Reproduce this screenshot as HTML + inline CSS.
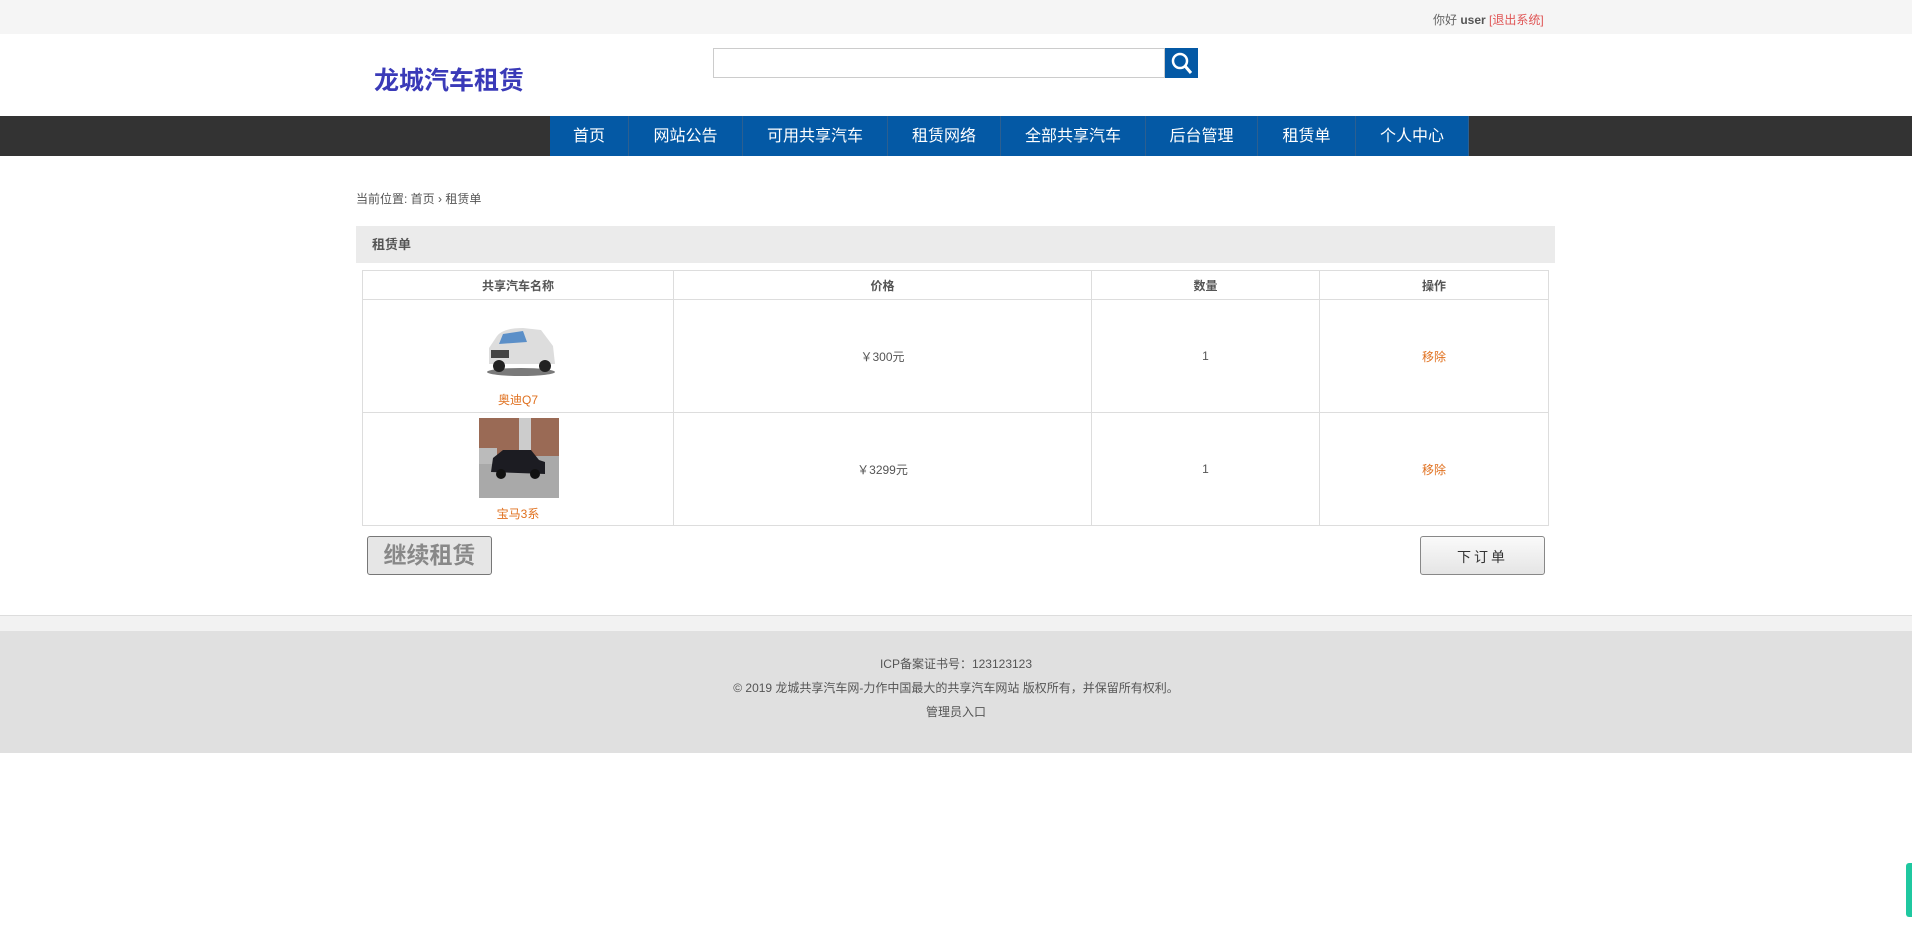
<!DOCTYPE html>
<html><head><meta charset="utf-8"><style>
*{margin:0;padding:0;box-sizing:border-box}
body{width:1912px;height:928px;background:#fff;font-family:"Liberation Sans","Noto Sans CJK SC",sans-serif;color:#555;position:relative;overflow:hidden;font-size:13px}
.abs{position:absolute}
.top{left:0;top:0;width:1912px;height:34px;background:#f5f5f5}
.nav{left:0;top:116px;width:1912px;height:40px;background:#333}
.nav div{position:absolute;top:0;height:40px;background:#0459a5;color:#fff;font-size:16px;line-height:42px;text-align:center;border-right:1px solid #2c5f90}
table{position:absolute;left:362px;top:270px;width:1187px;border-collapse:collapse}
td,th{border:1px solid #ddd;text-align:center;font-size:12px;color:#555}
th{height:29px;font-weight:bold}
td{height:113px}
.or{color:#e0701e}
</style></head><body>
<div class="abs top"></div>
<div class="abs" style="left:1433px;top:11px;font-size:12px;color:#666">你好 <b style="color:#555">user</b> <span style="color:#e05555">[退出系统]</span></div>
<div class="abs" style="left:374px;top:61px;font-size:25px;font-weight:bold;color:#3a3ab8">龙城汽车租赁</div>
<div class="abs" style="left:713px;top:48px;width:452px;height:30px;border:1px solid #ccc"></div>
<div class="abs" style="left:1165px;top:48px;width:33px;height:30px;background:#0459a5"><svg width="33" height="30"><circle cx="15" cy="13" r="7" fill="none" stroke="#fff" stroke-width="2.5"/><line x1="20" y1="18" x2="26" y2="25" stroke="#fff" stroke-width="3"/></svg></div>
<div class="abs nav">
<div style="left:550px;width:79px">首页</div>
<div style="left:629px;width:114px">网站公告</div>
<div style="left:743px;width:145px">可用共享汽车</div>
<div style="left:888px;width:113px">租赁网络</div>
<div style="left:1001px;width:145px">全部共享汽车</div>
<div style="left:1146px;width:112px">后台管理</div>
<div style="left:1258px;width:98px">租赁单</div>
<div style="left:1356px;width:113px">个人中心</div>
</div>
<div class="abs" style="left:356px;top:190px;font-size:12px;color:#555">当前位置: 首页 › 租赁单</div>
<div class="abs" style="left:356px;top:226px;width:1199px;height:37px;background:#ebebeb;font-size:13px;font-weight:bold;line-height:37px;padding-left:16px">租赁单</div>
<table>
<tr><th style="width:311px">共享汽车名称</th><th style="width:418px">价格</th><th style="width:228px">数量</th><th>操作</th></tr>
<tr><td style="position:relative"><svg class="abs" style="left:120px;top:20px" width="76" height="58"><ellipse cx="38" cy="52" rx="34" ry="4" fill="#222" opacity=".6"/><path d="M6 44 L6 28 L14 16 Q20 8 40 8 L58 10 L70 26 L72 44 Z" fill="#ddd"/><path d="M20 14 L40 11 L44 22 L16 24Z" fill="#5b8fc8"/><rect x="8" y="30" width="18" height="8" fill="#444"/><circle cx="16" cy="46" r="6" fill="#222"/><circle cx="62" cy="46" r="6" fill="#222"/></svg><div class="or abs" style="left:0;right:0;top:91px">奥迪Q7</div></td><td>￥300元</td><td>1</td><td class="or">移除</td></tr>
<tr><td style="position:relative"><svg class="abs" style="left:116px;top:5px" width="80" height="80"><rect width="80" height="80" fill="#a9a9a9"/><rect width="80" height="38" fill="#9a6a55"/><rect x="40" y="0" width="12" height="38" fill="#ccc"/><rect x="0" y="30" width="18" height="16" fill="#bbb"/><path d="M12 54 L14 40 L24 32 L52 32 L60 42 L66 44 L66 56 Z" fill="#1c1c22"/><circle cx="22" cy="56" r="5" fill="#111"/><circle cx="56" cy="56" r="5" fill="#111"/></svg><div class="or abs" style="left:0;right:0;top:92px">宝马3系</div></td><td>￥3299元</td><td>1</td><td class="or">移除</td></tr>
</table>
<div class="abs" style="left:367px;top:536px;width:125px;height:39px;border:1px solid #777;border-radius:3px;background:#e6e6e6;color:#888;font-size:23px;font-weight:bold;text-align:center;line-height:37px">继续租赁</div>
<div class="abs" style="left:1420px;top:536px;width:125px;height:39px;border:1px solid #888;border-radius:3px;background:linear-gradient(#fafafa,#e5e5e5);color:#333;font-size:14px;text-align:center;line-height:40px;letter-spacing:3px">下订单</div>
<div class="abs" style="left:0;top:615px;width:1912px;height:16px;background:#f2f2f2;border-top:1px solid #ddd"></div>
<div class="abs" style="left:0;top:631px;width:1912px;height:122px;background:#e0e0e0;text-align:center;font-size:12px;color:#555">
<div style="position:absolute;top:24px;width:100%">ICP备案证书号：123123123</div>
<div style="position:absolute;top:48px;width:100%">© 2019 龙城共享汽车网-力作中国最大的共享汽车网站 版权所有，并保留所有权利。</div>
<div style="position:absolute;top:72px;width:100%">管理员入口</div>
</div>
<div class="abs" style="left:1906px;top:863px;width:6px;height:54px;background:#1fc8a0;border-radius:3px 0 0 3px"></div>
</body></html>
